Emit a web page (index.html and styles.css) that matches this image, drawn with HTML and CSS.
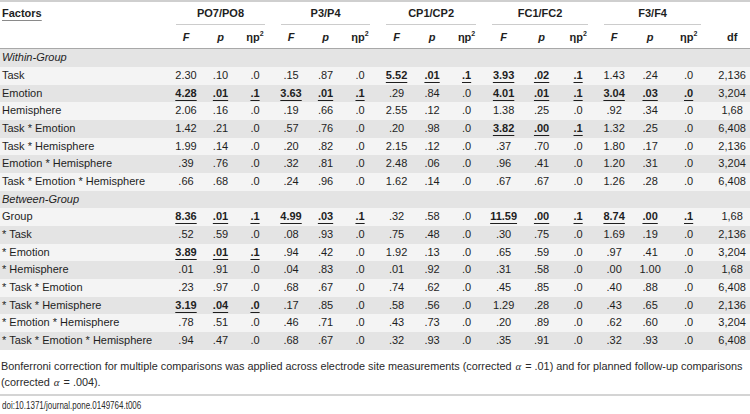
FILE: index.html
```html
<!DOCTYPE html>
<html>
<head>
<meta charset="utf-8">
<link rel="stylesheet" href="styles.css">
</head>
<body>
<div class="wrap">
<table class="stats">
<colgroup>
<col class="c-fac">
<col class="w36"><col class="w33"><col class="w36">
<col class="w36"><col class="w33"><col class="w36">
<col class="w37"><col class="w34"><col class="w35">
<col class="w39"><col class="w37"><col class="w36">
<col class="w36"><col class="w36"><col class="w41">
<col class="c-df">
</colgroup>
<thead>
<tr class="h1">
<th class="fac"><span class="factors">Factors</span></th>
<th class="grp" colspan="3"><div class="u">PO7/PO8</div></th>
<th class="grp" colspan="3"><div class="u">P3/P4</div></th>
<th class="grp" colspan="3"><div class="u">CP1/CP2</div></th>
<th class="grp" colspan="3"><div class="u">FC1/FC2</div></th>
<th class="grp" colspan="3"><div class="u">F3/F4</div></th>
<th class="blank"></th>
</tr>
<tr class="h2">
<th></th>
<th><i>F</i></th><th><i>p</i></th><th>ηp<sup>2</sup></th>
<th><i>F</i></th><th><i>p</i></th><th>ηp<sup>2</sup></th>
<th><i>F</i></th><th><i>p</i></th><th>ηp<sup>2</sup></th>
<th><i>F</i></th><th><i>p</i></th><th>ηp<sup>2</sup></th>
<th><i>F</i></th><th><i>p</i></th><th>ηp<sup>2</sup></th>
<th>df</th>
</tr>
</thead>
<tbody>
<tr class="dk"><td class="lbl"><i>Within-Group</i></td><td colspan="16"></td></tr>
<tr class="lt"><td class="lbl">Task</td><td>2.30</td><td>.10</td><td>.0</td><td>.15</td><td>.87</td><td>.0</td><td><b>5.52</b></td><td><b>.01</b></td><td><b>.1</b></td><td><b>3.93</b></td><td><b>.02</b></td><td><b>.1</b></td><td>1.43</td><td>.24</td><td>.0</td><td>2,136</td></tr>
<tr class="dk s"><td class="lbl">Emotion</td><td><b>4.28</b></td><td><b>.01</b></td><td><b>.1</b></td><td><b>3.63</b></td><td><b>.01</b></td><td><b>.1</b></td><td>.29</td><td>.84</td><td>.0</td><td><b>4.01</b></td><td><b>.01</b></td><td><b>.1</b></td><td><b>3.04</b></td><td><b>.03</b></td><td><b>.0</b></td><td>3,204</td></tr>
<tr class="lt"><td class="lbl">Hemisphere</td><td>2.06</td><td>.16</td><td>.0</td><td>.19</td><td>.66</td><td>.0</td><td>2.55</td><td>.12</td><td>.0</td><td>1.38</td><td>.25</td><td>.0</td><td>.92</td><td>.34</td><td>.0</td><td>1,68</td></tr>
<tr class="dk"><td class="lbl">Task * Emotion</td><td>1.42</td><td>.21</td><td>.0</td><td>.57</td><td>.76</td><td>.0</td><td>.20</td><td>.98</td><td>.0</td><td><b>3.82</b></td><td><b>.00</b></td><td><b>.1</b></td><td>1.32</td><td>.25</td><td>.0</td><td>6,408</td></tr>
<tr class="lt s"><td class="lbl">Task * Hemisphere</td><td>1.99</td><td>.14</td><td>.0</td><td>.20</td><td>.82</td><td>.0</td><td>2.15</td><td>.12</td><td>.0</td><td>.37</td><td>.70</td><td>.0</td><td>1.80</td><td>.17</td><td>.0</td><td>2,136</td></tr>
<tr class="dk"><td class="lbl">Emotion * Hemisphere</td><td>.39</td><td>.76</td><td>.0</td><td>.32</td><td>.81</td><td>.0</td><td>2.48</td><td>.06</td><td>.0</td><td>.96</td><td>.41</td><td>.0</td><td>1.20</td><td>.31</td><td>.0</td><td>3,204</td></tr>
<tr class="lt"><td class="lbl">Task * Emotion * Hemisphere</td><td>.66</td><td>.68</td><td>.0</td><td>.24</td><td>.96</td><td>.0</td><td>1.62</td><td>.14</td><td>.0</td><td>.67</td><td>.67</td><td>.0</td><td>1.26</td><td>.28</td><td>.0</td><td>6,408</td></tr>
<tr class="dk s"><td class="lbl"><i>Between-Group</i></td><td colspan="16"></td></tr>
<tr class="lt"><td class="lbl">Group</td><td><b>8.36</b></td><td><b>.01</b></td><td><b>.1</b></td><td><b>4.99</b></td><td><b>.03</b></td><td><b>.1</b></td><td>.32</td><td>.58</td><td>.0</td><td><b>11.59</b></td><td><b>.00</b></td><td><b>.1</b></td><td><b>8.74</b></td><td><b>.00</b></td><td><b>.1</b></td><td>1,68</td></tr>
<tr class="dk"><td class="lbl">* Task</td><td>.52</td><td>.59</td><td>.0</td><td>.08</td><td>.93</td><td>.0</td><td>.75</td><td>.48</td><td>.0</td><td>.30</td><td>.75</td><td>.0</td><td>1.69</td><td>.19</td><td>.0</td><td>2,136</td></tr>
<tr class="lt s"><td class="lbl">* Emotion</td><td><b>3.89</b></td><td><b>.01</b></td><td><b>.1</b></td><td>.94</td><td>.42</td><td>.0</td><td>1.92</td><td>.13</td><td>.0</td><td>.65</td><td>.59</td><td>.0</td><td>.97</td><td>.41</td><td>.0</td><td>3,204</td></tr>
<tr class="dk"><td class="lbl">* Hemisphere</td><td>.01</td><td>.91</td><td>.0</td><td>.04</td><td>.83</td><td>.0</td><td>.01</td><td>.92</td><td>.0</td><td>.31</td><td>.58</td><td>.0</td><td>.00</td><td>1.00</td><td>.0</td><td>1,68</td></tr>
<tr class="lt"><td class="lbl">* Task * Emotion</td><td>.23</td><td>.97</td><td>.0</td><td>.68</td><td>.67</td><td>.0</td><td>.74</td><td>.62</td><td>.0</td><td>.45</td><td>.85</td><td>.0</td><td>.40</td><td>.88</td><td>.0</td><td>6,408</td></tr>
<tr class="dk s"><td class="lbl">* Task * Hemisphere</td><td><b>3.19</b></td><td><b>.04</b></td><td><b>.0</b></td><td>.17</td><td>.85</td><td>.0</td><td>.58</td><td>.56</td><td>.0</td><td>1.29</td><td>.28</td><td>.0</td><td>.43</td><td>.65</td><td>.0</td><td>2,136</td></tr>
<tr class="lt"><td class="lbl">* Emotion * Hemisphere</td><td>.78</td><td>.51</td><td>.0</td><td>.46</td><td>.71</td><td>.0</td><td>.43</td><td>.73</td><td>.0</td><td>.20</td><td>.89</td><td>.0</td><td>.62</td><td>.60</td><td>.0</td><td>3,204</td></tr>
<tr class="dk"><td class="lbl">* Task * Emotion * Hemisphere</td><td>.94</td><td>.47</td><td>.0</td><td>.68</td><td>.67</td><td>.0</td><td>.32</td><td>.93</td><td>.0</td><td>.35</td><td>.91</td><td>.0</td><td>.32</td><td>.93</td><td>.0</td><td>6,408</td></tr>
</tbody>
</table>
<p class="note">Bonferroni correction for multiple comparisons was applied across electrode site measurements (corrected <i class="alpha">α</i> = .01) and for planned follow-up comparisons (corrected <i class="alpha">α</i> = .004).</p>
<div class="doi"><span class="doi-text">doi:10.1371/journal.pone.0149764.t006</span></div>
</div>
</body>
</html>
```
FILE: styles.css
```css
html, body {
  margin: 0;
  padding: 0;
  background: #ffffff;
}
body {
  font-family: "Liberation Sans", Arial, sans-serif;
  color: #1e1e1e;
  width: 750px;
  height: 414px;
  overflow: hidden;
}
.wrap {
  width: 750px;
  overflow: hidden;
}
.stats {
  border-collapse: collapse;
  table-layout: fixed;
  width: 755px;
  font-size: 11px;
  border-top: 2px solid #cfcfcf;
}
.c-fac { width: 168px; }
.w33 { width: 33px; }
.w34 { width: 34px; }
.w35 { width: 35px; }
.w36 { width: 36px; }
.w37 { width: 37px; }
.w39 { width: 39px; }
.w41 { width: 41px; }
.c-df { width: 46px; }
.stats th, .stats td {
  padding: 0;
  text-align: center;
  white-space: nowrap;
}
.stats th {
  font-weight: bold;
  line-height: 14px;
}
.h1 th {
  vertical-align: bottom;
  padding-top: 4px;
}
.h1 .fac {
  text-align: left;
  padding: 4px 0 5px 2px;
}
.factors {
  text-decoration: underline;
  text-decoration-color: #8a8a8a;
  text-underline-offset: 3px;
}
.h1 .grp {
  padding: 4px 8px 0 8px;
}
.grp .u {
  border-bottom: 1px solid #cccccc;
  line-height: 14px;
  padding-bottom: 4px;
}
.h2 th {
  padding: 5px 0 4px 0;
  vertical-align: middle;
  border-bottom: 1px solid #a8a8a8;
}
.h2 i {
  font-style: italic;
}
.h2 sup {
  font-size: 7px;
  vertical-align: 5px;
  line-height: 0;
}
.stats tbody tr {
  height: 18px;
}
.stats tbody tr.s {
  height: 17px;
}
.stats tbody td {
  line-height: 13px;
  vertical-align: middle;
}
.stats td.lbl {
  text-align: left;
  padding-left: 2px;
}
.stats td b {
  text-decoration: underline;
  text-underline-offset: 3px;
}
.dk { background: #e4e4e4; }
.lt { background: #f4f4f4; }
.note {
  margin: 8px 0 0 0;
  padding: 0 0 4px 1px;
  font-size: 10.85px;
  line-height: 16px;
  color: #2a2a2a;
  border-bottom: 2px solid #d4d4d4;
}
.alpha {
  font-family: "Liberation Serif", serif;
  font-style: italic;
  padding: 0 1px;
}
.doi {
  padding: 4px 0 0 2px;
  font-size: 10px;
  line-height: 12px;
  color: #2a2a2a;
}
.doi-text {
  display: inline-block;
  transform: scaleX(0.8);
  transform-origin: left center;
}
```
